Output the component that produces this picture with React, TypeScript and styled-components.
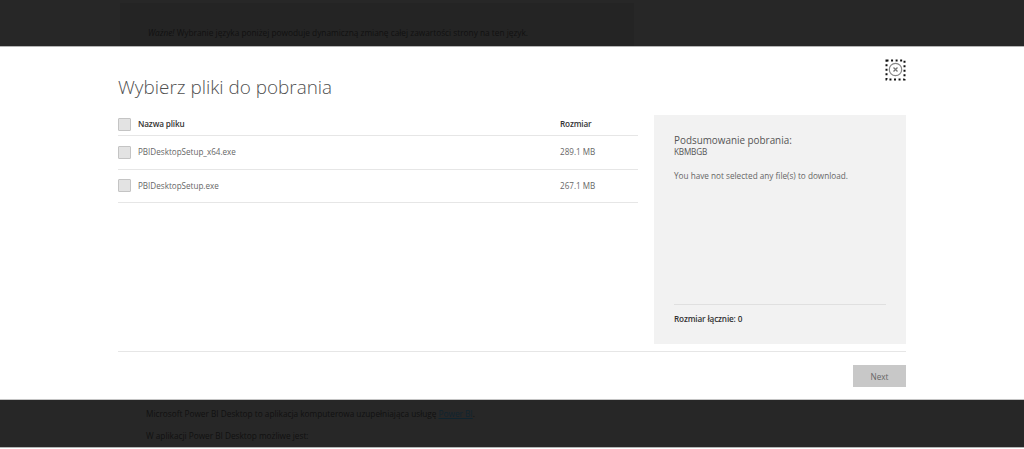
import React from "react";
import styled, { createGlobalStyle } from "styled-components";

const Global = createGlobalStyle`
  html, body { margin: 0; padding: 0; background: #fff; }
  body { font-family: "Open Sans", "Liberation Sans", sans-serif; overflow: hidden; }
`;

const Page = styled.div`
  width: 1024px;
  height: 449px;
  display: flex;
  flex-direction: column;
  overflow: hidden;
`;

const TopBand = styled.div`
  height: 46px;
  box-sizing: border-box;
  background: #272727;
  padding: 3px 0 0 120px;
`;

const Notice = styled.div`
  width: 514px;
  height: 43px;
  box-sizing: border-box;
  background: #242424;
  padding: 23px 0 0 28px;
  font-size: 8.3px;
  line-height: 14px;
  color: #111;
  white-space: nowrap;
`;

const Modal = styled.div`
  height: 354px;
  box-sizing: border-box;
  background: #fff;
  border-top: 1px solid #b5b5b5;
  border-bottom: 1px solid #c4c4c4;
  padding: 0 118px;
  display: flex;
  flex-direction: column;
  position: relative;
`;

const Title = styled.h1`
  margin: 25px 0 0;
  font-size: 18.9px;
  line-height: 30px;
  font-weight: 300;
  color: #505050;
`;

const Close = styled.button`
  position: absolute;
  left: 885px;
  top: 12px;
  width: 21px;
  height: 22px;
  padding: 0;
  border: 0;
  background: none;
`;

const Columns = styled.div`
  display: flex;
  gap: 16px;
  margin-top: 13px;
  height: 229px;
`;

const Table = styled.div`
  width: 520px;
  display: flex;
  flex-direction: column;
`;

const Row = styled.div<{ $head?: boolean }>`
  height: ${(p) => (p.$head ? "21px" : "33.5px")};
  box-sizing: border-box;
  border-bottom: 1px solid #e6e6e6;
  display: flex;
  align-items: ${(p) => (p.$head ? "flex-start" : "center")};
  font-size: ${(p) => (p.$head ? "8.2px" : "8.1px")};
  letter-spacing: ${(p) => (p.$head ? "-0.15px" : "0")};
  line-height: 18px;
  font-weight: ${(p) => (p.$head ? 600 : 400)};
  color: ${(p) => (p.$head ? "#333" : "#666")};
`;

const Check = styled.span<{ $head?: boolean }>`
  width: 13px;
  height: 13px;
  box-sizing: border-box;
  flex: none;
  border: 1px solid #c4c4c4;
  background: #e3e3e3;
  border-radius: 1px;
  margin-top: ${(p) => (p.$head ? "3px" : "0")};
`;

const Name = styled.span`
  width: 422px;
  margin-left: 7px;
`;

const Summary = styled.aside`
  width: 252px;
  box-sizing: border-box;
  background: #f2f2f2;
  padding: 19px 20px 0;
  display: flex;
  flex-direction: column;
`;

const SumTitle = styled.div`
  font-size: 9.9px;
  line-height: 13px;
  color: #555;
`;

const SumSub = styled.div`
  font-size: 8.2px;
  letter-spacing: -0.2px;
  line-height: 10px;
  color: #555;
`;

const SumText = styled.p`
  margin: 12px 0 0;
  font-size: 8.2px;
  line-height: 14px;
  color: #666;
`;

const SumTotal = styled.div`
  margin-top: auto;
  margin-bottom: 18px;
  border-top: 1px solid #e0e0e0;
  padding-top: 7px;
  font-size: 8.2px;
  letter-spacing: -0.15px;
  line-height: 14px;
  font-weight: 600;
  color: #333;
`;

const Footer = styled.div`
  margin-top: 7px;
  border-top: 1px solid #e6e6e6;
  padding-top: 13px;
  display: flex;
  justify-content: flex-end;
`;

const Next = styled.button`
  width: 53px;
  height: 22px;
  border: 0;
  padding: 0;
  background: #c8c8c8;
  color: #666;
  font-family: inherit;
  font-size: 8.2px;
`;

const BottomBand = styled.div`
  height: 48px;
  box-sizing: border-box;
  background: #272727;
  padding: 7px 0 0 146px;
  font-size: 8.25px;
  line-height: 14px;
  color: #111;
  white-space: nowrap;
  border-bottom: 1px solid #b5b5b5;
`;

const Para = styled.p`
  margin: 0 0 8px;
`;

const DarkLink = styled.a`
  color: #10242f;
  text-decoration: underline;
`;

const CloseIcon = () => (
  <svg width="21" height="22" viewBox="0 0 21 22" fill="none">
    <rect x="1.5" y="1.5" width="18" height="19" stroke="#111" strokeWidth="2" strokeDasharray="2 2.55" />
    <circle cx="10.5" cy="10.5" r="6.2" stroke="#888" strokeWidth="1.2" />
    <path d="M8.5 8.5l4 4M12.5 8.5l-4 4" stroke="#777" strokeWidth="1.3" />
  </svg>
);

const files = [
  { name: "PBIDesktopSetup_x64.exe", size: "289.1 MB" },
  { name: "PBIDesktopSetup.exe", size: "267.1 MB" },
];

export default function App() {
  return (
    <Page>
      <Global />
      <TopBand>
        <Notice>
          <em>Ważne!</em> Wybranie języka poniżej powoduje dynamiczną zmianę całej zawartości strony na ten język.
        </Notice>
      </TopBand>
      <Modal>
        <Close aria-label="Zamknij">
          <CloseIcon />
        </Close>
        <Title>Wybierz pliki do pobrania</Title>
        <Columns>
          <Table>
            <Row $head>
              <Check $head />
              <Name>Nazwa pliku</Name>
              <span>Rozmiar</span>
            </Row>
            {files.map((f) => (
              <Row key={f.name}>
                <Check />
                <Name>{f.name}</Name>
                <span>{f.size}</span>
              </Row>
            ))}
          </Table>
          <Summary>
            <SumTitle>Podsumowanie pobrania:</SumTitle>
            <SumSub>KBMBGB</SumSub>
            <SumText>You have not selected any file(s) to download.</SumText>
            <SumTotal>Rozmiar łącznie: 0</SumTotal>
          </Summary>
        </Columns>
        <Footer>
          <Next>Next</Next>
        </Footer>
      </Modal>
      <BottomBand>
        <Para>
          Microsoft Power BI Desktop to aplikacja komputerowa uzupełniająca usługę <DarkLink>Power BI</DarkLink>.
        </Para>
        <Para>W aplikacji Power BI Desktop możliwe jest:</Para>
      </BottomBand>
    </Page>
  );
}
